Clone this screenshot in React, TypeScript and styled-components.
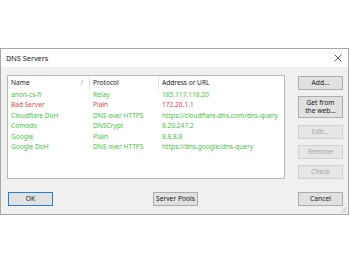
import styled, { createGlobalStyle } from 'styled-components';

const GlobalStyle = createGlobalStyle`
  html, body {
    margin: 0;
    padding: 0;
    background: #ffffff;
  }
  body {
    font-family: 'Noto Sans', 'Open Sans', sans-serif;
    font-size: 6.6px;
    color: #1a1a1a;
  }
`;

const Page = styled.div`
  width: 350px;
  height: 263px;
  padding-top: 48px;
  box-sizing: border-box;
`;

const Window = styled.div`
  width: 349px;
  height: 167px;
  box-sizing: border-box;
  border: 1px solid #a8a8a8;
  background: #f0f0f0;
  display: flex;
  flex-direction: column;
  position: relative;
`;

const TitleBar = styled.div`
  height: 18px;
  background: #ffffff;
  display: flex;
  align-items: center;
  justify-content: space-between;
  padding: 0 5px 0 5px;
  font-size: 7.3px;
`;

const CloseIcon = styled.svg`
  width: 8px;
  height: 8px;
  margin-right: 1px;
`;

const Body = styled.div`
  flex: 1;
  display: flex;
  flex-direction: column;
  padding: 8px 5px 7px 6px;
`;

const Main = styled.div`
  display: flex;
  gap: 13px;
`;

const List = styled.div`
  width: 278px;
  height: 104px;
  box-sizing: border-box;
  border: 1px solid #b8b8b8;
  background: #ffffff;
`;

const Row = styled.div<{ $tone?: 'green' | 'red' | 'head' }>`
  display: grid;
  grid-template-columns: 82px 69px 1fr;
  height: ${({ $tone }) => ($tone === 'head' ? '13px' : '10.5px')};
  align-items: center;
  color: ${({ $tone }) =>
    $tone === 'green' ? '#3fc43f' : $tone === 'red' ? '#e04646' : '#1a1a1a'};
  white-space: nowrap;
`;

const Cell = styled.div<{ $head?: boolean }>`
  padding-left: 3px;
  height: 100%;
  display: flex;
  align-items: center;
  justify-content: space-between;
  box-sizing: border-box;
  border-right: ${({ $head }) => ($head ? '1px solid #e3e3e3' : 'none')};
  overflow: hidden;
`;

const SortMark = styled.span`
  color: #9a9a9a;
  margin-right: 6px;
`;

const Side = styled.div`
  display: flex;
  flex-direction: column;
  gap: 6.3px;
  padding-top: 1px;
`;

const Button = styled.button<{ $tall?: boolean; $default?: boolean }>`
  width: 45px;
  height: ${({ $tall }) => ($tall ? '22px' : '14px')};
  box-sizing: border-box;
  padding: 0;
  margin: 0;
  font-family: inherit;
  font-size: 6.7px;
  line-height: 8px;
  color: #1a1a1a;
  background: #e1e1e1;
  border: ${({ $default }) => ($default ? '1.5px solid #2a7fd4' : '1px solid #adadad')};
  &:disabled {
    color: #a6a6a6;
    background: #e6e6e6;
    border-color: #cfcfcf;
  }
`;

const Footer = styled.div`
  display: flex;
  justify-content: space-between;
  align-items: center;
  margin-top: 13px;
  padding-left: 1px;
`;

const Grip = styled.svg`
  position: absolute;
  right: 1px;
  bottom: 1px;
  width: 8px;
  height: 8px;
`;

const servers = [
  { name: 'anon-cs-fi', protocol: 'Relay', address: '185.117.118.20', tone: 'green' as const },
  { name: 'Bad Server', protocol: 'Plain', address: '172.20.1.1', tone: 'red' as const },
  { name: 'Cloudflare DoH', protocol: 'DNS over HTTPS', address: 'https://cloudflare-dns.com/dns-query', tone: 'green' as const },
  { name: 'Comodo', protocol: 'DNSCrypt', address: '8.20.247.2', tone: 'green' as const },
  { name: 'Google', protocol: 'Plain', address: '8.8.8.8', tone: 'green' as const },
  { name: 'Google DoH', protocol: 'DNS over HTTPS', address: 'https://dns.google/dns-query', tone: 'green' as const },
];

export default function App() {
  return (
    <Page>
      <GlobalStyle />
      <Window>
        <TitleBar>
          <span>DNS Servers</span>
          <CloseIcon viewBox="0 0 8 8">
            <path d="M0.5 0.5 L7.5 7.5 M7.5 0.5 L0.5 7.5" stroke="#333" strokeWidth="0.8" fill="none" />
          </CloseIcon>
        </TitleBar>
        <Body>
          <Main>
            <List>
              <Row $tone="head">
                <Cell $head>
                  Name<SortMark>/</SortMark>
                </Cell>
                <Cell $head>Protocol</Cell>
                <Cell>Address or URL</Cell>
              </Row>
              {servers.map((s) => (
                <Row key={s.name} $tone={s.tone}>
                  <Cell>{s.name}</Cell>
                  <Cell>{s.protocol}</Cell>
                  <Cell>{s.address}</Cell>
                </Row>
              ))}
            </List>
            <Side>
              <Button>Add...</Button>
              <Button $tall>
                Get from
                <br />
                the web...
              </Button>
              <Button disabled>Edit...</Button>
              <Button disabled>Remove</Button>
              <Button disabled>Check</Button>
            </Side>
          </Main>
          <Footer>
            <Button $default>OK</Button>
            <Button>Server Pools</Button>
            <Button>Cancel</Button>
          </Footer>
        </Body>
        <Grip viewBox="0 0 8 8">
          <path d="M7.5 2 L2 7.5 M7.5 4.5 L4.5 7.5 M7.5 6.5 L6.5 7.5" stroke="#b0b0b0" strokeWidth="0.7" />
        </Grip>
      </Window>
    </Page>
  );
}
